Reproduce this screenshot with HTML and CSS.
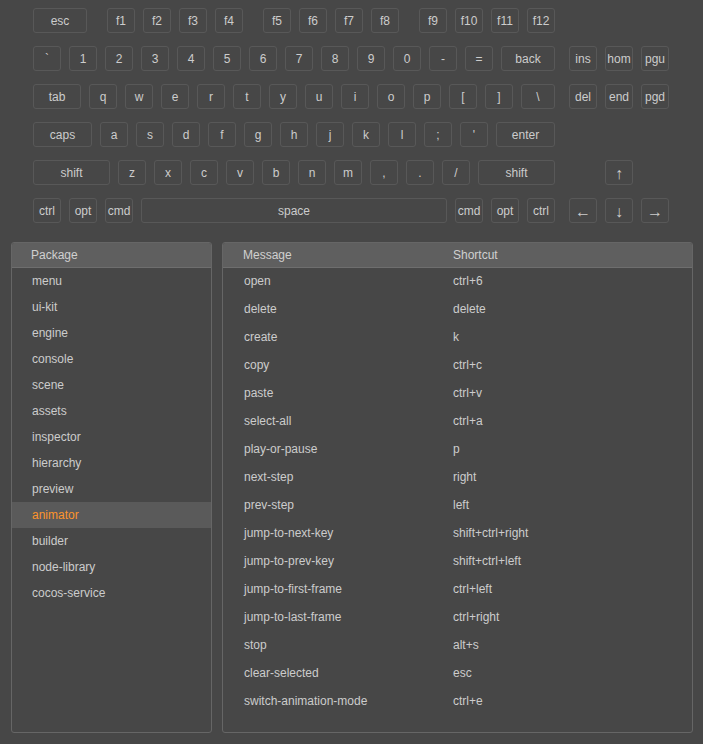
FILE: index.html
```html
<!DOCTYPE html>
<html>
<head>
<meta charset="utf-8">
<link rel="stylesheet" href="styles.css">
</head>
<body>
<div class="kb">
  <div class="row">
    <div class="main">
      <div class="key w54">esc</div>
      <div class="grp">
        <div class="key">f1</div><div class="key">f2</div><div class="key">f3</div><div class="key">f4</div>
      </div>
      <div class="grp">
        <div class="key">f5</div><div class="key">f6</div><div class="key">f7</div><div class="key">f8</div>
      </div>
      <div class="grp">
        <div class="key">f9</div><div class="key">f10</div><div class="key">f11</div><div class="key">f12</div>
      </div>
    </div>
  </div>
  <div class="row">
    <div class="main">
      <div class="key">`</div><div class="key">1</div><div class="key">2</div><div class="key">3</div><div class="key">4</div><div class="key">5</div><div class="key">6</div><div class="key">7</div><div class="key">8</div><div class="key">9</div><div class="key">0</div><div class="key">-</div><div class="key">=</div><div class="key w54">back</div>
    </div>
    <div class="side">
      <div class="key">ins</div><div class="key">hom</div><div class="key">pgu</div>
    </div>
  </div>
  <div class="row">
    <div class="main">
      <div class="key w48">tab</div><div class="key">q</div><div class="key">w</div><div class="key">e</div><div class="key">r</div><div class="key">t</div><div class="key">y</div><div class="key">u</div><div class="key">i</div><div class="key">o</div><div class="key">p</div><div class="key">[</div><div class="key">]</div><div class="key w34">\</div>
    </div>
    <div class="side">
      <div class="key">del</div><div class="key">end</div><div class="key">pgd</div>
    </div>
  </div>
  <div class="row">
    <div class="main">
      <div class="key w59">caps</div><div class="key">a</div><div class="key">s</div><div class="key">d</div><div class="key">f</div><div class="key">g</div><div class="key">h</div><div class="key">j</div><div class="key">k</div><div class="key">l</div><div class="key">;</div><div class="key">'</div><div class="key w59">enter</div>
    </div>
  </div>
  <div class="row">
    <div class="main">
      <div class="key w77">shift</div><div class="key">z</div><div class="key">x</div><div class="key">c</div><div class="key">v</div><div class="key">b</div><div class="key">n</div><div class="key">m</div><div class="key">,</div><div class="key">.</div><div class="key">/</div><div class="key w77">shift</div>
    </div>
    <div class="side">
      <div class="gap"></div><div class="key arrow">↑</div>
    </div>
  </div>
  <div class="row">
    <div class="main">
      <div class="key">ctrl</div><div class="key">opt</div><div class="key">cmd</div><div class="key w306">space</div><div class="key">cmd</div><div class="key">opt</div><div class="key">ctrl</div>
    </div>
    <div class="side">
      <div class="key arrow">←</div><div class="key arrow">↓</div><div class="key arrow">→</div>
    </div>
  </div>
</div>

<div class="panels">
  <div class="panel left">
    <div class="head"><span>Package</span></div>
    <div class="list">
      <div class="item">menu</div>
      <div class="item">ui-kit</div>
      <div class="item">engine</div>
      <div class="item">console</div>
      <div class="item">scene</div>
      <div class="item">assets</div>
      <div class="item">inspector</div>
      <div class="item">hierarchy</div>
      <div class="item">preview</div>
      <div class="item selected">animator</div>
      <div class="item">builder</div>
      <div class="item">node-library</div>
      <div class="item">cocos-service</div>
    </div>
  </div>
  <div class="panel right">
    <div class="head cols"><span>Message</span><span>Shortcut</span></div>
    <div class="list">
      <div class="srow cols"><span>open</span><span>ctrl+6</span></div>
      <div class="srow cols"><span>delete</span><span>delete</span></div>
      <div class="srow cols"><span>create</span><span>k</span></div>
      <div class="srow cols"><span>copy</span><span>ctrl+c</span></div>
      <div class="srow cols"><span>paste</span><span>ctrl+v</span></div>
      <div class="srow cols"><span>select-all</span><span>ctrl+a</span></div>
      <div class="srow cols"><span>play-or-pause</span><span>p</span></div>
      <div class="srow cols"><span>next-step</span><span>right</span></div>
      <div class="srow cols"><span>prev-step</span><span>left</span></div>
      <div class="srow cols"><span>jump-to-next-key</span><span>shift+ctrl+right</span></div>
      <div class="srow cols"><span>jump-to-prev-key</span><span>shift+ctrl+left</span></div>
      <div class="srow cols"><span>jump-to-first-frame</span><span>ctrl+left</span></div>
      <div class="srow cols"><span>jump-to-last-frame</span><span>ctrl+right</span></div>
      <div class="srow cols"><span>stop</span><span>alt+s</span></div>
      <div class="srow cols"><span>clear-selected</span><span>esc</span></div>
      <div class="srow cols"><span>switch-animation-mode</span><span>ctrl+e</span></div>
    </div>
  </div>
</div>
</body>
</html>
```

FILE: styles.css
```css
html, body {
  margin: 0;
  padding: 0;
  background: #474747;
}
body {
  font-family: "Liberation Sans", Arial, sans-serif;
  font-size: 12px;
  color: #cccccc;
  width: 703px;
  height: 744px;
  overflow: hidden;
}
.kb {
  display: flex;
  flex-direction: column;
  gap: 13px;
  padding: 8px 0 0 33px;
}
.row {
  display: flex;
  gap: 14px;
}
.main {
  display: flex;
  gap: 8px;
  width: 522px;
}
.main .grp {
  display: flex;
  gap: 8px;
  margin-left: 12px;
}
.side {
  display: flex;
  gap: 8px;
}
.gap {
  width: 28px;
}
.key {
  box-sizing: border-box;
  width: 28px;
  height: 25px;
  border: 1px solid #585858;
  border-radius: 3px;
  display: flex;
  align-items: center;
  justify-content: center;
  color: #cccccc;
  white-space: nowrap;
}
.key.arrow {
  font-size: 16px;
  padding-top: 3px;
}
.w34 { width: 34px; }
.w48 { width: 48px; }
.w54 { width: 54px; }
.w59 { width: 59px; }
.w77 { width: 77px; }
.w306 { width: 306px; }

.panels {
  display: flex;
  gap: 10px;
  padding: 19px 0 0 11px;
}
.panel {
  box-sizing: border-box;
  height: 491px;
  border: 1px solid #666666;
  border-radius: 3px;
  overflow: hidden;
}
.left { width: 201px; }
.right { width: 471px; }
.head {
  height: 24px;
  line-height: 24px;
  background: #5f5f5f;
  border-bottom: 1px solid #6e6e6e;
  padding-left: 19px;
  color: #d0d0d0;
}
.right .head {
  padding-left: 20px;
}
.item {
  height: 26px;
  line-height: 27px;
  padding-left: 20px;
}
.item.selected {
  background: #5a5a5a;
  color: #fd942b;
}
.cols {
  display: grid;
  grid-template-columns: 210px 1fr;
}
.srow {
  height: 28px;
  line-height: 27px;
  padding-left: 21px;
  grid-template-columns: 209px 1fr;
}
```
